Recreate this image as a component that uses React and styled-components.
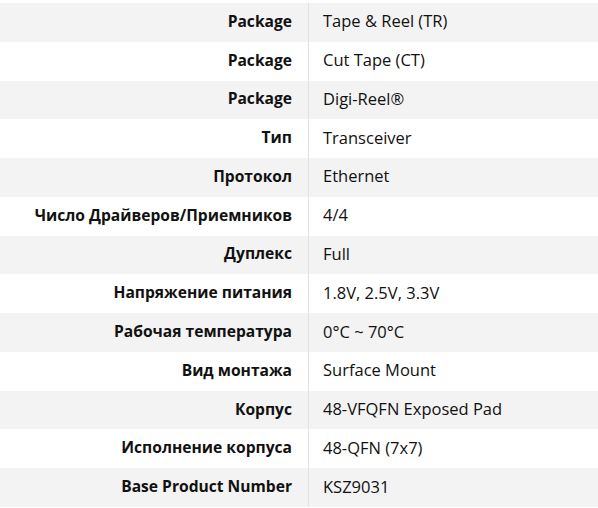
import styled, { createGlobalStyle } from "styled-components";

const GlobalStyle = createGlobalStyle`
  html, body {
    margin: 0;
    padding: 0;
    background: #ffffff;
  }
  body {
    font-family: "Open Sans", "Noto Sans", sans-serif;
    color: #111;
  }
`;

const Table = styled.section`
  width: 598px;
  padding-top: 3px;
`;

const Row = styled.div`
  display: grid;
  grid-template-columns: 309px 1fr;
  height: 38.77px;
  background-color: ${(p) => (p.$striped ? "#f3f3f3" : "#ffffff")};
`;

const Label = styled.div`
  display: flex;
  align-items: center;
  justify-content: flex-end;
  padding: 0 16px 3px 0;
  border-right: 1px solid #e2e2e2;
  font-size: 15.6px;
  font-weight: 700;
  white-space: nowrap;
`;

const Value = styled.div`
  display: flex;
  align-items: center;
  padding: 0 0 3px 14px;
  font-size: 16.5px;
  white-space: nowrap;
`;

const specs = [
  ["Package", "Tape & Reel (TR)"],
  ["Package", "Cut Tape (CT)"],
  ["Package", "Digi-Reel®"],
  ["Тип", "Transceiver"],
  ["Протокол", "Ethernet"],
  ["Число Драйверов/Приемников", "4/4"],
  ["Дуплекс", "Full"],
  ["Напряжение питания", "1.8V, 2.5V, 3.3V"],
  ["Рабочая температура", "0°C ~ 70°C"],
  ["Вид монтажа", "Surface Mount"],
  ["Корпус", "48-VFQFN Exposed Pad"],
  ["Исполнение корпуса", "48-QFN (7x7)"],
  ["Base Product Number", "KSZ9031"],
];

function App() {
  return (
    <>
      <GlobalStyle />
      <Table>
        {specs.map(([label, value], i) => (
          <Row key={i} $striped={i % 2 === 0}>
            <Label>{label}</Label>
            <Value>{value}</Value>
          </Row>
        ))}
      </Table>
    </>
  );
}

export default App;
